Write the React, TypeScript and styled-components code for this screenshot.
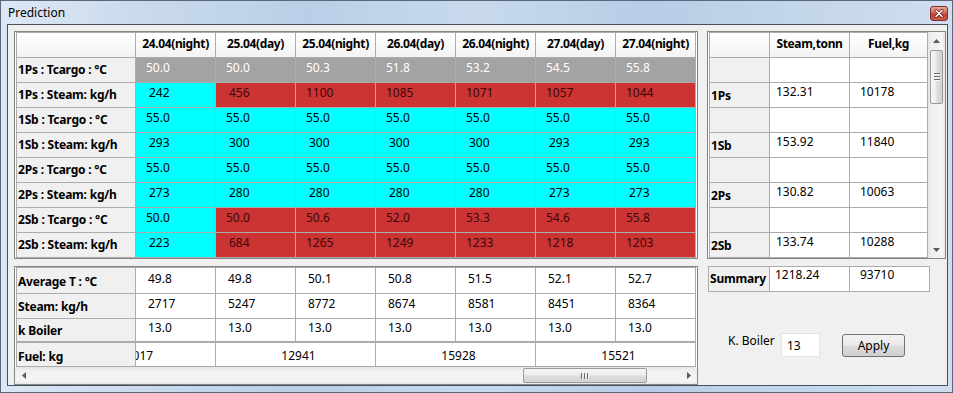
import React from "react";
import styled, { createGlobalStyle } from "styled-components";

const FONT = `"Noto Sans", "Open Sans", "DejaVu Sans", sans-serif`;
const GRID = "#acacac";

const GlobalStyle = createGlobalStyle`
  * { box-sizing: border-box; }
  html, body { margin: 0; padding: 0; background: #ffffff; }
  body { font-family: ${FONT}; font-size: 12px; color: #000; }
`;

type Tone = "grey" | "cyan" | "red" | "white";
const TONES: Record<Tone, { bg: string; fg: string }> = {
  grey: { bg: "#a3a3a3", fg: "#ffffff" },
  cyan: { bg: "#00ffff", fg: "#000000" },
  red: { bg: "#cc3333", fg: "#3a0808" },
  white: { bg: "#ffffff", fg: "#000000" },
};

const Window = styled.div`
  width: 953px;
  height: 393px;
  display: flex;
  flex-direction: column;
  border: 1px solid #59687a;
  background: linear-gradient(
    90deg,
    #dce7f4 0%,
    #c9d9ec 16%,
    #b9cfe7 32%,
    #c8d9ed 50%,
    #b7cde6 68%,
    #c4d6ea 84%,
    #d0def0 100%
  );
  overflow: hidden;
`;

const TitleBar = styled.div`
  height: 23px;
  flex: none;
  display: flex;
  align-items: center;
  justify-content: space-between;
  padding: 0 4px 0 7px;
`;

const Title = styled.span`
  font-size: 12px;
  line-height: 16px;
  color: #000;
`;

const CloseButton = styled.div`
  width: 18px;
  height: 15px;
  margin-top: 2px;
  border: 1px solid #7d2f27;
  border-radius: 3px;
  background: linear-gradient(#eaa99e 0%, #d66b5b 45%, #c4412f 56%, #cc5c4c 100%);
  display: flex;
  align-items: center;
  justify-content: center;
`;

const Client = styled.div`
  flex: 1;
  margin: 0 4px 6px 6px;
  border: 1px solid #45515f;
  background: #f0f0f0;
  display: grid;
  grid-template-columns: 684px 239px;
  column-gap: 9px;
  align-content: start;
  padding: 6px 0 0 6px;
`;

const Column = styled.div`
  display: flex;
  flex-direction: column;
`;

const GridFrame = styled.div`
  border: 1px solid #858585;
  background: #ffffff;
  padding: 0 1px;
  display: flex;
  overflow: hidden;
`;

const RightFrame = styled(GridFrame)`
  padding: 0 0 0 1px;
`;

const BottomPanel = styled.div`
  margin-top: 7px;
  height: 119px;
  border: 1px solid #858585;
  background: #ffffff;
  display: flex;
  flex-direction: column;
`;

const DataGrid = styled.div<{ $cols: string; $rows: string; $indent?: number; $top?: number }>`
  display: grid;
  grid-template-columns: ${(p) => p.$cols};
  grid-template-rows: ${(p) => p.$rows};
  gap: 1px;
  padding: 1px;
  background: ${GRID};
  align-self: flex-start;
  margin-left: ${(p) => p.$indent ?? 0}px;
  margin-top: ${(p) => p.$top ?? 0}px;
`;

const ColHead = styled.div`
  background: linear-gradient(#ffffff, #f3f3f3);
  font-weight: 700;
  text-align: center;
  padding-top: 3px;
  line-height: 16px;
  letter-spacing: -0.35px;
  white-space: nowrap;
  overflow: hidden;
`;

const RowHead = styled.div<{ $top: number }>`
  background: #f0f0f0;
  font-weight: 700;
  padding: ${(p) => p.$top}px 0 0 1px;
  line-height: 16px;
  letter-spacing: -0.2px;
  white-space: nowrap;
  overflow: hidden;
`;

const ValueCell = styled.div<{ $tone: Tone; $pad: number; $top: number }>`
  background: ${(p) => TONES[p.$tone].bg};
  color: ${(p) => TONES[p.$tone].fg};
  padding: ${(p) => p.$top}px 0 0 ${(p) => p.$pad}px;
  line-height: 16px;
  white-space: nowrap;
  overflow: hidden;
`;

const CenterCell = styled.div<{ $top: number }>`
  background: #ffffff;
  text-align: center;
  padding: ${(p) => p.$top}px 0 0 6px;
  line-height: 16px;
  white-space: nowrap;
  overflow: hidden;
`;

const CutCell = styled.div<{ $top: number }>`
  background: #ffffff;
  padding-top: ${(p) => p.$top}px;
  line-height: 16px;
  white-space: nowrap;
  overflow: hidden;
`;

const CutText = styled.span`
  display: block;
  width: 160px;
  margin-left: -80px;
  text-align: center;
`;

const VScroll = styled.div`
  width: 17px;
  flex: none;
  display: flex;
  flex-direction: column;
  align-items: center;
  background: linear-gradient(90deg, #e3e3e3 0%, #efefef 18%, #f5f5f5 82%, #e7e7e7 100%);
`;

const HScroll = styled.div`
  height: 17px;
  flex: none;
  display: flex;
  align-items: flex-start;
  background: linear-gradient(#e3e3e3 0%, #efefef 18%, #f5f5f5 82%, #e7e7e7 100%);
`;

const ArrowBox = styled.div`
  width: 17px;
  height: 17px;
  flex: none;
  display: flex;
  align-items: center;
  justify-content: center;
`;

const VThumb = styled.div`
  width: 13px;
  height: 54px;
  margin-top: 1px;
  border: 1px solid #9a9a9a;
  border-radius: 2px;
  background: linear-gradient(90deg, #f6f6f6 0%, #ececec 45%, #dcdcdc 55%, #d3d3d3 100%);
  display: flex;
  flex-direction: column;
  align-items: center;
  justify-content: center;
  gap: 1px;
`;

const HThumb = styled.div<{ $offset: number }>`
  width: 124px;
  height: 15px;
  margin: 1px 0 0 ${(p) => p.$offset}px;
  border: 1px solid #9a9a9a;
  border-radius: 2px;
  background: linear-gradient(#f6f6f6 0%, #ececec 45%, #dcdcdc 55%, #d3d3d3 100%);
  display: flex;
  align-items: center;
  justify-content: center;
  gap: 1px;
`;

const GripH = styled.div`
  width: 6px;
  height: 2px;
  border-top: 1px solid #6a6a6a;
  border-bottom: 1px solid #fafafa;
`;

const GripV = styled.div`
  width: 2px;
  height: 6px;
  border-left: 1px solid #6a6a6a;
  border-right: 1px solid #fafafa;
`;

const Spacer = styled.div`
  flex: 1;
`;

const KRow = styled.div`
  display: flex;
  align-items: flex-start;
  margin-top: 41px;
  padding-left: 21px;
`;

const KLabel = styled.span`
  width: 53px;
  line-height: 16px;
  white-space: nowrap;
`;

const KInput = styled.input`
  width: 39px;
  height: 24px;
  border: 1px solid #e4e4e4;
  background: #ffffff;
  padding: 0 0 0 5px;
  font-family: ${FONT};
  font-size: 12px;
  color: #000;
  outline: none;
`;

const ApplyButton = styled.button`
  width: 63px;
  height: 23px;
  margin: 1px 0 0 22px;
  border: 1px solid #707070;
  border-radius: 3px;
  background: linear-gradient(#f2f2f2 0%, #ebebeb 48%, #dddddd 52%, #cfcfcf 100%);
  font-family: ${FONT};
  font-size: 12px;
  color: #000;
  padding: 0;
  line-height: 16px;
`;

const Tri = ({ dir }: { dir: "up" | "down" | "left" | "right" }) => {
  const pts =
    dir === "up"
      ? "0,4 3.5,0 7,4"
      : dir === "down"
      ? "0,0 7,0 3.5,4"
      : dir === "left"
      ? "4,0 4,7 0,3.5"
      : "0,0 4,3.5 0,7";
  const w = dir === "up" || dir === "down" ? 7 : 4;
  const h = dir === "up" || dir === "down" ? 4 : 7;
  return (
    <svg width={w} height={h} viewBox={`0 0 ${w} ${h}`}>
      <polygon points={pts} fill="#5a5a5a" />
    </svg>
  );
};

const CloseIcon = () => (
  <svg width="10" height="9" viewBox="0 0 10 9">
    <path d="M2 1.5 L8 7.5 M8 1.5 L2 7.5" stroke="#5a1a14" strokeWidth="3" strokeLinecap="round" />
    <path d="M2 1.5 L8 7.5 M8 1.5 L2 7.5" stroke="#ffffff" strokeWidth="1.6" strokeLinecap="round" />
  </svg>
);

const HEADERS = [
  "24.04(night)",
  "25.04(day)",
  "25.04(night)",
  "26.04(day)",
  "26.04(night)",
  "27.04(day)",
  "27.04(night)",
];

type MainRow = { label: string; values: string[]; tones: Tone[] };
const c7 = (t: Tone): Tone[] => Array(7).fill(t);
const firstCyan: Tone[] = ["cyan", "red", "red", "red", "red", "red", "red"];

const MAIN_ROWS: MainRow[] = [
  { label: "1Ps : Tcargo : °C", values: ["50.0", "50.0", "50.3", "51.8", "53.2", "54.5", "55.8"], tones: c7("grey") },
  { label: "1Ps : Steam: kg/h", values: ["242", "456", "1100", "1085", "1071", "1057", "1044"], tones: firstCyan },
  { label: "1Sb : Tcargo : °C", values: Array(7).fill("55.0"), tones: c7("cyan") },
  { label: "1Sb : Steam: kg/h", values: ["293", "300", "300", "300", "300", "293", "293"], tones: c7("cyan") },
  { label: "2Ps : Tcargo : °C", values: Array(7).fill("55.0"), tones: c7("cyan") },
  { label: "2Ps : Steam: kg/h", values: ["273", "280", "280", "280", "280", "273", "273"], tones: c7("cyan") },
  { label: "2Sb : Tcargo : °C", values: ["50.0", "50.0", "50.6", "52.0", "53.3", "54.6", "55.8"], tones: firstCyan },
  { label: "2Sb : Steam: kg/h", values: ["223", "684", "1265", "1249", "1233", "1218", "1203"], tones: firstCyan },
];

const AVG_ROWS = [
  { label: "Average T : °C", values: ["49.8", "49.8", "50.1", "50.8", "51.5", "52.1", "52.7"], lt: 6, vt: 3 },
  { label: "Steam: kg/h", values: ["2717", "5247", "8772", "8674", "8581", "8451", "8364"], lt: 5, vt: 2 },
  { label: "k Boiler", values: Array(7).fill("13.0"), lt: 4, vt: 1 },
];

const RIGHT_ROWS = [
  { label: "", steam: "", fuel: "" },
  { label: "1Ps", steam: "132.31", fuel: "10178" },
  { label: "", steam: "", fuel: "" },
  { label: "1Sb", steam: "153.92", fuel: "11840" },
  { label: "", steam: "", fuel: "" },
  { label: "2Ps", steam: "130.82", fuel: "10063" },
  { label: "", steam: "", fuel: "" },
  { label: "2Sb", steam: "133.74", fuel: "10288" },
];

export default function App() {
  return (
    <>
      <GlobalStyle />
      <Window>
        <TitleBar>
          <Title>Prediction</Title>
          <CloseButton>
            <CloseIcon />
          </CloseButton>
        </TitleBar>
        <Client>
          <Column>
            <GridFrame>
              <DataGrid $cols="118px repeat(7, 79px)" $rows="repeat(9, 24px)">
                <ColHead />
                {HEADERS.map((h) => (
                  <ColHead key={h}>{h}</ColHead>
                ))}
                {MAIN_ROWS.map((r) => (
                  <React.Fragment key={r.label}>
                    <RowHead $top={4}>{r.label}</RowHead>
                    {r.values.map((v, i) => (
                      <ValueCell key={i} $tone={r.tones[i]} $pad={v.length < 4 ? 13 : 10} $top={2}>
                        {v}
                      </ValueCell>
                    ))}
                  </React.Fragment>
                ))}
              </DataGrid>
            </GridFrame>
            <BottomPanel>
              <DataGrid $cols="118px repeat(7, 79px)" $rows="25px 24px 22px" $indent={1}>
                {AVG_ROWS.map((r) => (
                  <React.Fragment key={r.label}>
                    <RowHead $top={r.lt}>{r.label}</RowHead>
                    {r.values.map((v, i) => (
                      <ValueCell key={i} $tone="white" $pad={12} $top={r.vt}>
                        {v}
                      </ValueCell>
                    ))}
                  </React.Fragment>
                ))}
              </DataGrid>
              <DataGrid $cols="118px 79px 159px 159px 159px" $rows="23px" $indent={1}>
                <RowHead $top={6}>Fuel: kg</RowHead>
                <CutCell $top={5}>
                  <CutText>12017</CutText>
                </CutCell>
                <CenterCell $top={5}>12941</CenterCell>
                <CenterCell $top={5}>15928</CenterCell>
                <CenterCell $top={5}>15521</CenterCell>
              </DataGrid>
              <Spacer />
              <HScroll>
                <ArrowBox>
                  <Tri dir="left" />
                </ArrowBox>
                <HThumb $offset={491}>
                  <GripV />
                  <GripV />
                  <GripV />
                </HThumb>
                <Spacer />
                <ArrowBox>
                  <Tri dir="right" />
                </ArrowBox>
              </HScroll>
            </BottomPanel>
          </Column>
          <Column>
            <RightFrame>
              <DataGrid $cols="59px 79px 77px" $rows="repeat(9, 24px)">
                <ColHead />
                <ColHead>Steam,tonn</ColHead>
                <ColHead>Fuel,kg</ColHead>
                {RIGHT_ROWS.map((r, i) => (
                  <React.Fragment key={i}>
                    <RowHead $top={5}>{r.label}</RowHead>
                    <ValueCell $tone="white" $pad={6} $top={1}>
                      {r.steam}
                    </ValueCell>
                    <ValueCell $tone="white" $pad={10} $top={1}>
                      {r.fuel}
                    </ValueCell>
                  </React.Fragment>
                ))}
              </DataGrid>
              <VScroll>
                <ArrowBox>
                  <Tri dir="up" />
                </ArrowBox>
                <VThumb>
                  <GripH />
                  <GripH />
                  <GripH />
                </VThumb>
                <Spacer />
                <ArrowBox>
                  <Tri dir="down" />
                </ArrowBox>
              </VScroll>
            </RightFrame>
            <DataGrid $cols="60px 79px 79px" $rows="24px" $indent={1} $top={7}>
              <RowHead $top={4}>Summary</RowHead>
              <ValueCell $tone="white" $pad={5} $top={0}>
                1218.24
              </ValueCell>
              <ValueCell $tone="white" $pad={10} $top={0}>
                93710
              </ValueCell>
            </DataGrid>
            <KRow>
              <KLabel>K. Boiler</KLabel>
              <KInput readOnly defaultValue="13" />
              <ApplyButton type="button">Apply</ApplyButton>
            </KRow>
          </Column>
        </Client>
      </Window>
    </>
  );
}
